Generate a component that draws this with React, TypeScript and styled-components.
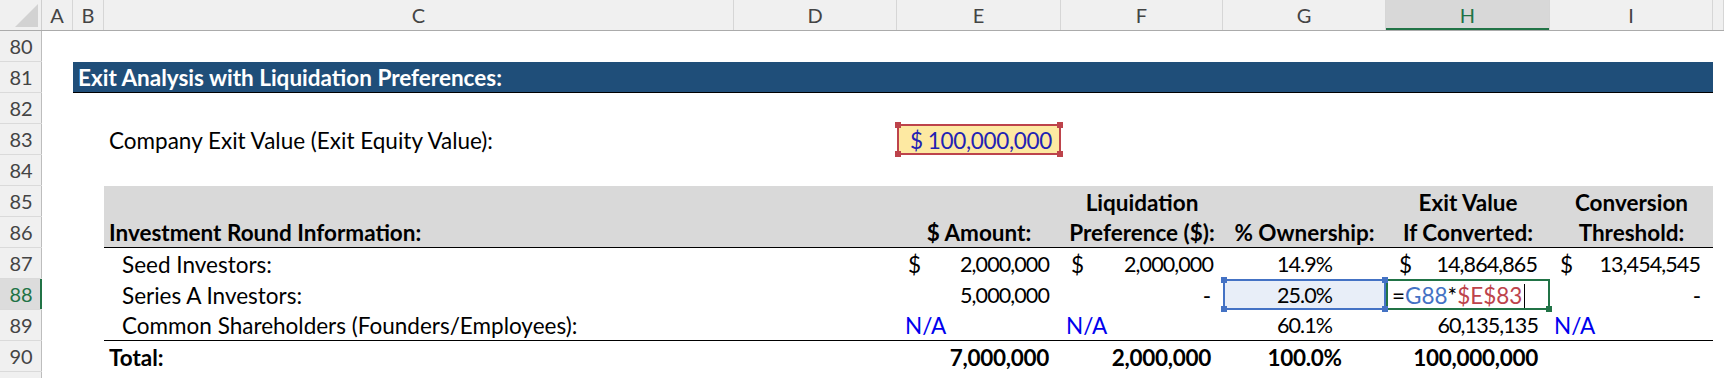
import React from "react";
import styled, { createGlobalStyle, css } from "styled-components";

const FONT = `"Lato", "Liberation Sans", sans-serif`;
const GRID = "42px 31px 31px 630px 163px 164px 162px 163px 164px 163px 1fr";

const NAVY = "#1f4e79";
const GRAY = "#d9d9d9";
const INPUT_BLUE = "#0000ee";
const GREEN = "#217346";
const REF_BLUE = "#4472c4";
const REF_RED = "#bd434b";

// Lato figures run wider than the sheet's font, so regular figures get tightened
const figures = css`
  font-size: 21.5px;
  letter-spacing: -0.9px;
`;

const boldFigures = css`
  letter-spacing: -0.3px;
`;

const GlobalStyle = createGlobalStyle`
  html, body {
    margin: 0;
    padding: 0;
    background: #fff;
  }
  body {
    font-family: ${FONT};
  }
`;

const Sheet = styled.div`
  width: 1724px;
  height: 378px;
  overflow: hidden;
  background: #fff;
  font-family: ${FONT};
  font-size: 22.5px;
  color: #000;
`;

const HeaderBar = styled.div`
  display: grid;
  grid-template-columns: ${GRID};
  height: 31px;
  box-sizing: border-box;
  background: #f0f0f0;
  border-bottom: 1px solid #ababab;
`;

const CornerCell = styled.div`
  position: relative;
  border-right: 1px solid #cfcfcf;
  &::after {
    content: "";
    position: absolute;
    right: 3px;
    bottom: 3px;
    width: 23px;
    height: 23px;
    background: #d2d2d2;
    clip-path: polygon(100% 0, 100% 100%, 0 100%);
  }
`;

const ColHead = styled.div<{ $active?: boolean }>`
  display: flex;
  align-items: center;
  justify-content: center;
  border-right: 1px solid #d6d6d6;
  font-size: 20px;
  color: ${(p) => (p.$active ? GREEN : "#444")};
  background: ${(p) => (p.$active ? "#d8d8d8" : "transparent")};
  box-shadow: ${(p) => (p.$active ? `inset 0 -2px 0 ${GREEN}` : "none")};
`;

const Row = styled.div`
  display: grid;
  grid-template-columns: ${GRID};
  height: 31px;
`;

const RowNum = styled.div<{ $active?: boolean }>`
  display: flex;
  align-items: center;
  justify-content: center;
  box-sizing: border-box;
  font-size: 20px;
  color: ${(p) => (p.$active ? GREEN : "#444")};
  background: ${(p) => (p.$active ? "#dcdcdc" : "#f0f0f0")};
  border-bottom: 1px solid #dadada;
  box-shadow: ${(p) =>
    p.$active ? `inset -2px 0 0 ${GREEN}` : "inset -1px 0 0 #bdbdbd"};
`;

const Gutter = styled.div<{ $span?: number }>`
  grid-column: span ${(p) => p.$span ?? 2};
`;

const Banner = styled.div`
  grid-column: span 8;
  display: flex;
  align-items: flex-end;
  box-sizing: border-box;
  padding: 0 0 1px 5px;
  line-height: 27px;
  background: ${NAVY};
  color: #fff;
  font-weight: 700;
  border-bottom: 1px solid #000;
`;

type Align = "left" | "right" | "center";

const Cell = styled.div<{
  $align?: Align;
  $bold?: boolean;
  $fill?: string;
  $rule?: boolean;
  $ink?: string;
  $indent?: number;
  $num?: boolean;
}>`
  position: relative;
  display: flex;
  align-items: flex-end;
  justify-content: ${(p) =>
    p.$align === "right" ? "flex-end" : p.$align === "center" ? "center" : "flex-start"};
  box-sizing: border-box;
  min-width: 0;
  padding: 0 ${(p) => (p.$align === "right" ? 12 : 0)}px 1px
    ${(p) => (p.$align === "right" || p.$align === "center" ? 0 : p.$indent ?? 5)}px;
  line-height: 27px;
  white-space: nowrap;
  background: ${(p) => p.$fill ?? "transparent"};
  border-bottom: ${(p) => (p.$rule ? "1px solid #000" : "none")};
  font-weight: ${(p) => (p.$bold ? 700 : 400)};
  color: ${(p) => p.$ink ?? "#000"};
  ${(p) => p.$num && (p.$bold ? boldFigures : figures)}
`;

const Acct = styled(Cell)<{ $pl?: number; $pr?: number }>`
  justify-content: space-between;
  padding-left: ${(p) => p.$pl ?? 11}px;
  padding-right: ${(p) => p.$pr ?? 12}px;
`;

const Amount = styled.span<{ $loose?: boolean }>`
  ${(p) => (p.$loose ? boldFigures : figures)}
`;

const Frame = styled.span<{ $tone: string }>`
  position: absolute;
  inset: 0;
  z-index: 1;
  border: 2px solid ${(p) => p.$tone};
  pointer-events: none;
`;

type Corner = "tl" | "tr" | "bl" | "br";

const Handle = styled.span<{ $tone: string; $corner: Corner }>`
  position: absolute;
  z-index: 2;
  width: 6px;
  height: 6px;
  background: ${(p) => p.$tone};
  ${(p) => (p.$corner[0] === "t" ? "top: -2px;" : "bottom: -2px;")}
  ${(p) => (p.$corner[1] === "l" ? "left: -2px;" : "right: -2px;")}
`;

const Ref = styled.span<{ $tone: string }>`
  color: ${(p) => p.$tone};
`;

const Caret = styled.span`
  display: inline-block;
  width: 1px;
  height: 25px;
  margin-left: 2px;
  background: #000;
  vertical-align: bottom;
`;

const Marker: React.FC<{ tone: string; corners: Corner[] }> = ({ tone, corners }) => (
  <>
    <Frame $tone={tone} />
    {corners.map((c) => (
      <Handle key={c} $tone={tone} $corner={c} />
    ))}
  </>
);

const ALL: Corner[] = ["tl", "tr", "bl", "br"];
const LETTERS = ["A", "B", "C", "D", "E", "F", "G", "H", "I"];

export default function App() {
  return (
    <>
      <GlobalStyle />
      <Sheet>
        <HeaderBar>
          <CornerCell />
          {LETTERS.map((l) => (
            <ColHead key={l} $active={l === "H"}>
              {l}
            </ColHead>
          ))}
          <ColHead />
        </HeaderBar>

        <Row>
          <RowNum>80</RowNum>
        </Row>

        <Row>
          <RowNum>81</RowNum>
          <Gutter $span={1} />
          <Banner>Exit Analysis with Liquidation Preferences:</Banner>
        </Row>

        <Row>
          <RowNum>82</RowNum>
        </Row>

        <Row>
          <RowNum>83</RowNum>
          <Gutter />
          <Cell>Company Exit Value (Exit Equity Value):</Cell>
          <Cell />
          <Acct $fill="#fde9a2" $ink="#2222b4" $pl={13} $pr={9}>
            <span>$</span>
            <Amount $loose>100,000,000</Amount>
            <Marker tone={REF_RED} corners={ALL} />
          </Acct>
        </Row>

        <Row>
          <RowNum>84</RowNum>
        </Row>

        <Row>
          <RowNum>85</RowNum>
          <Gutter />
          <Cell $fill={GRAY} />
          <Cell $fill={GRAY} />
          <Cell $fill={GRAY} />
          <Cell $fill={GRAY} $align="center" $bold>
            Liquidation
          </Cell>
          <Cell $fill={GRAY} />
          <Cell $fill={GRAY} $align="center" $bold>
            Exit Value
          </Cell>
          <Cell $fill={GRAY} $align="center" $bold>
            Conversion
          </Cell>
        </Row>

        <Row>
          <RowNum>86</RowNum>
          <Gutter />
          <Cell $fill={GRAY} $rule $bold>
            Investment Round Information:
          </Cell>
          <Cell $fill={GRAY} $rule />
          <Cell $fill={GRAY} $rule $align="center" $bold>
            $ Amount:
          </Cell>
          <Cell $fill={GRAY} $rule $align="center" $bold>
            Preference ($):
          </Cell>
          <Cell $fill={GRAY} $rule $align="center" $bold>
            % Ownership:
          </Cell>
          <Cell $fill={GRAY} $rule $align="center" $bold>
            If Converted:
          </Cell>
          <Cell $fill={GRAY} $rule $align="center" $bold>
            Threshold:
          </Cell>
        </Row>

        <Row>
          <RowNum>87</RowNum>
          <Gutter />
          <Cell $indent={18}>Seed Investors:</Cell>
          <Cell />
          <Acct>
            <span>$</span>
            <Amount>2,000,000</Amount>
          </Acct>
          <Acct $pl={10} $pr={10}>
            <span>$</span>
            <Amount>2,000,000</Amount>
          </Acct>
          <Cell $align="center" $num>
            14.9%
          </Cell>
          <Acct $pl={13} $pr={13}>
            <span>$</span>
            <Amount>14,864,865</Amount>
          </Acct>
          <Acct $pl={10} $pr={13}>
            <span>$</span>
            <Amount>13,454,545</Amount>
          </Acct>
        </Row>

        <Row>
          <RowNum $active>88</RowNum>
          <Gutter />
          <Cell $indent={18}>Series A Investors:</Cell>
          <Cell />
          <Cell $align="right" $num>
            5,000,000
          </Cell>
          <Cell $align="right">-</Cell>
          <Cell $align="center" $fill="#e8eef8" $num>
            25.0%
            <Marker tone={REF_BLUE} corners={ALL} />
          </Cell>
          <Cell $indent={6}>
            <span>
              =<Ref $tone={REF_BLUE}>G88</Ref>*<Ref $tone={REF_RED}>$E$83</Ref>
              <Caret />
            </span>
            <Marker tone={GREEN} corners={["br"]} />
          </Cell>
          <Cell $align="right">-</Cell>
        </Row>

        <Row>
          <RowNum>89</RowNum>
          <Gutter />
          <Cell $rule $indent={18}>
            Common Shareholders (Founders/Employees):
          </Cell>
          <Cell $rule />
          <Cell $rule $ink={INPUT_BLUE} $indent={8}>
            N/A
          </Cell>
          <Cell $rule $ink={INPUT_BLUE} $indent={5}>
            N/A
          </Cell>
          <Cell $rule $align="center" $num>
            60.1%
          </Cell>
          <Cell $rule $align="right" $num>
            60,135,135
          </Cell>
          <Cell $rule $ink={INPUT_BLUE} $indent={4}>
            N/A
          </Cell>
        </Row>

        <Row>
          <RowNum>90</RowNum>
          <Gutter />
          <Cell $bold>Total:</Cell>
          <Cell />
          <Cell $align="right" $bold $num>
            7,000,000
          </Cell>
          <Cell $align="right" $bold $num>
            2,000,000
          </Cell>
          <Cell $align="center" $bold $num>
            100.0%
          </Cell>
          <Cell $align="right" $bold $num>
            100,000,000
          </Cell>
        </Row>

        <Row>
          <RowNum />
        </Row>
      </Sheet>
    </>
  );
}
